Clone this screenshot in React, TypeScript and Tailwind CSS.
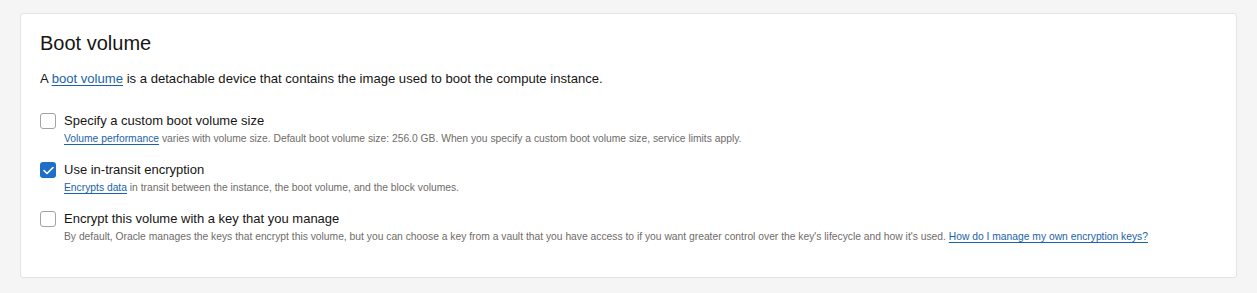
const font = { fontFamily: '"Liberation Sans", Arial, sans-serif' };

function Checkbox({ checked }: { checked?: boolean }) {
  if (checked) {
    return (
      <span className="mt-[1px] flex h-4 w-4 shrink-0 items-center justify-center rounded-[3px] bg-[#1d6fc9]">
        <svg width="11" height="9" viewBox="0 0 11 9" fill="none">
          <path d="M1 4.5L4 7.5L10 1.5" stroke="white" strokeWidth="1.6" strokeLinecap="round" strokeLinejoin="round" />
        </svg>
      </span>
    );
  }
  return <span className="mt-[1px] h-4 w-4 shrink-0 rounded-[3px] border border-[#a3a3a3] bg-white" />;
}

function Option({ label, checked, children }: { label: string; checked?: boolean; children: React.ReactNode }) {
  return (
    <div className="flex gap-[8px]">
      <Checkbox checked={checked} />
      <div>
        <div className="text-[13px] leading-[18px] text-[#161513]">{label}</div>
        <div className="mt-[2px] text-[10.3px] leading-[14px] text-[#6f6c69]">{children}</div>
      </div>
    </div>
  );
}

const link = 'text-[#1b63a8] underline underline-offset-[2px]';

export default function App() {
  return (
    <div className="min-h-[293px] bg-[#f5f5f5] px-5 pt-[13px]" style={font}>
      <div className="rounded-[3px] border border-[#e4e4e4] bg-white px-[19px] pt-[15px] pb-[33px]">
        <h2 className="text-[20px] leading-[28px] text-[#161513]">Boot volume</h2>
        <p className="mt-[13px] text-[13.1px] leading-[18px] text-[#161513]">
          A <a className={link}>boot volume</a> is a detachable device that contains the image used to boot the compute instance.
        </p>
        <div className="mt-[24px] flex flex-col gap-[15px]">
          <Option label="Specify a custom boot volume size">
            <a className={link}>Volume performance</a> varies with volume size. Default boot volume size: 256.0 GB. When you specify a custom boot volume size, service limits apply.
          </Option>
          <Option label="Use in-transit encryption" checked>
            <a className={link}>Encrypts data</a> in transit between the instance, the boot volume, and the block volumes.
          </Option>
          <Option label="Encrypt this volume with a key that you manage">
            By default, Oracle manages the keys that encrypt this volume, but you can choose a key from a vault that you have access to if you want greater control over the key's lifecycle and how it's used.{' '}
            <a className={link}>How do I manage my own encryption keys?</a>
          </Option>
        </div>
      </div>
    </div>
  );
}
